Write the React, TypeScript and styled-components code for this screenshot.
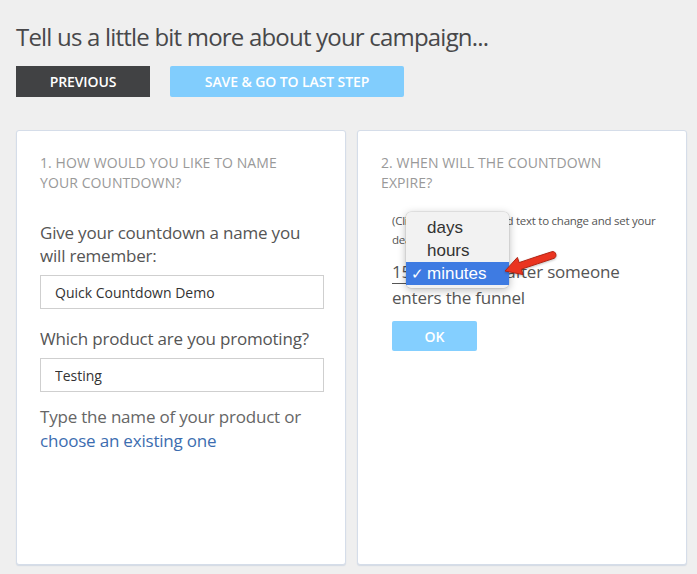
import styled, { createGlobalStyle } from 'styled-components';

const GlobalStyle = createGlobalStyle`
  html, body {
    margin: 0;
    padding: 0;
    background: #efefef;
  }
  body {
    font-family: 'Open Sans', 'Liberation Sans', sans-serif;
    color: #555;
  }
`;

const UNITS = ['days', 'hours', 'minutes'];

function App() {
  return (
    <StyledPage>
      <GlobalStyle />
      <StyledTitle>Tell us a little bit more about your campaign...</StyledTitle>
      <StyledToolbar>
        <StyledButton $variant="dark">Previous</StyledButton>
        <StyledButton $variant="light">Save &amp; Go to last step</StyledButton>
      </StyledToolbar>
      <StyledCards>
        <StyledCard>
          <StyledStepTitle>1. How would you like to name your countdown?</StyledStepTitle>
          <StyledLabel $top={28}>Give your countdown a name you will remember:</StyledLabel>
          <StyledInput defaultValue="Quick Countdown Demo" />
          <StyledLabel $top={18}>Which product are you promoting?</StyledLabel>
          <StyledInput defaultValue="Testing" />
          <StyledHelp>
            Type the name of your product or <StyledLink href="#">choose an existing one</StyledLink>
          </StyledHelp>
        </StyledCard>
        <StyledCard>
          <StyledStepTitle>2. When will the countdown expire?</StyledStepTitle>
          <StyledHint>(Click on the underlined text to change and set your deadline)</StyledHint>
          <StyledSentence>
            <StyledUnderlined>15 minutes</StyledUnderlined> after someone enters the funnel
            <StyledMenu>
              {UNITS.map((unit) => (
                <StyledMenuItem key={unit} $selected={unit === 'minutes'}>
                  <StyledCheck>{unit === 'minutes' ? '✓' : ''}</StyledCheck>
                  {unit}
                </StyledMenuItem>
              ))}
            </StyledMenu>
            <StyledArrow width="58" height="28" viewBox="0 0 58 28">
              <path
                d="M3 21 L15.4 7.4 L17.1 12.6 C 28 9, 39 5, 49.9 1.7 C 54 0.6, 55.5 6.8, 52.1 8.3 C 41 12, 30 15.6, 19.3 19.2 L21 24.6 Z"
                fill="#ea3420"
                stroke="#b32413"
                strokeWidth="1"
                strokeLinejoin="round"
              />
            </StyledArrow>
          </StyledSentence>
          <StyledOkButton>OK</StyledOkButton>
        </StyledCard>
      </StyledCards>
    </StyledPage>
  );
}

const StyledPage = styled.div`
  width: 697px;
  height: 574px;
  padding: 0 10px 0 16px;
  box-sizing: border-box;
  overflow: hidden;
`;

const StyledTitle = styled.h1`
  margin: 0;
  padding-top: 20px;
  font-size: 24px;
  line-height: 34px;
  font-weight: 400;
  color: #48484a;
  letter-spacing: -0.8px;
`;

const StyledToolbar = styled.div`
  display: flex;
  gap: 20px;
  margin-top: 12px;
`;

const StyledButton = styled.button<{ $variant: 'dark' | 'light' }>`
  height: 31px;
  padding: 0;
  width: ${(props) => (props.$variant === 'dark' ? '134px' : '234px')};
  border: none;
  border-radius: ${(props) => (props.$variant === 'dark' ? '0' : '2px')};
  background: ${(props) => (props.$variant === 'dark' ? '#414244' : '#81cdfd')};
  color: #fff;
  font-family: inherit;
  font-size: 14px;
  font-weight: 600;
  text-transform: uppercase;
  letter-spacing: -0.1px;
`;

const StyledCards = styled.div`
  display: grid;
  grid-template-columns: 330px 330px;
  gap: 11px;
  margin-top: 33px;
`;

const StyledCard = styled.div`
  position: relative;
  height: 435px;
  box-sizing: border-box;
  padding: 22px 23px 0 23px;
  background: #fff;
  border: 1px solid #d5dde9;
  border-radius: 3px;
  box-shadow: 0 1px 1px rgba(160, 180, 210, 0.35);
`;

const StyledStepTitle = styled.div`
  font-size: 14px;
  line-height: 20px;
  color: #999;
  text-transform: uppercase;
  letter-spacing: 0.1px;
  padding-right: 20px;
`;

const StyledLabel = styled.div<{ $top: number }>`
  margin-top: ${(props) => props.$top}px;
  margin-bottom: 8px;
  font-size: 17px;
  line-height: 23px;
  color: #555;
  letter-spacing: -0.2px;
`;

const StyledInput = styled.input`
  display: block;
  width: 284px;
  height: 34px;
  box-sizing: border-box;
  padding: 0 14px;
  border: 1px solid #cfcfcf;
  border-radius: 0;
  font-family: inherit;
  font-size: 14px;
  color: #333;
  outline: none;
`;

const StyledHelp = styled.div`
  margin-top: 13px;
  font-size: 17px;
  line-height: 24px;
  color: #666;
  letter-spacing: -0.2px;
  padding-right: 10px;
`;

const StyledLink = styled.a`
  color: #3c6db0;
  text-decoration: none;
`;

const StyledHint = styled.div`
  margin-top: 18px;
  padding-left: 11px;
  margin-right: -8px;
  font-size: 11.5px;
  line-height: 19px;
  color: #555;
  letter-spacing: -0.25px;
`;

const StyledSentence = styled.div`
  position: relative;
  margin-top: 10px;
  padding-left: 11px;
  font-size: 17px;
  line-height: 26px;
  color: #555;
  letter-spacing: -0.2px;
`;

const StyledUnderlined = styled.span`
  display: inline-block;
  width: 110px;
  line-height: 22px;
  color: #555;
  border-bottom: 1px solid #555;
`;

const StyledMenu = styled.div`
  position: absolute;
  left: 25px;
  top: -47px;
  width: 103px;
  padding: 4px 0 3px;
  box-sizing: border-box;
  background: #f2f2f2;
  border-radius: 5px;
  box-shadow: 0 2px 8px rgba(0, 0, 0, 0.28), 0 0 0 0.5px rgba(0, 0, 0, 0.12);
  font-family: 'Liberation Sans', sans-serif;
`;

const StyledMenuItem = styled.div<{ $selected: boolean }>`
  display: flex;
  align-items: center;
  height: 23px;
  font-size: 17px;
  letter-spacing: 0;
  color: ${(props) => (props.$selected ? '#fff' : '#333')};
  background: ${(props) => (props.$selected ? '#3e7be2' : 'transparent')};
`;

const StyledCheck = styled.span`
  width: 21px;
  padding-left: 5px;
  box-sizing: border-box;
  font-size: 15px;
`;

const StyledArrow = styled.svg`
  position: absolute;
  left: 121px;
  top: -9px;
  filter: drop-shadow(0 1px 1px rgba(0, 0, 0, 0.25));
`;

const StyledOkButton = styled.button`
  display: block;
  margin-top: 10px;
  margin-left: 11px;
  width: 85px;
  height: 30px;
  border: none;
  border-radius: 2px;
  background: #84cfff;
  color: #fff;
  font-family: inherit;
  font-size: 14px;
  font-weight: 600;
`;

export default App;
